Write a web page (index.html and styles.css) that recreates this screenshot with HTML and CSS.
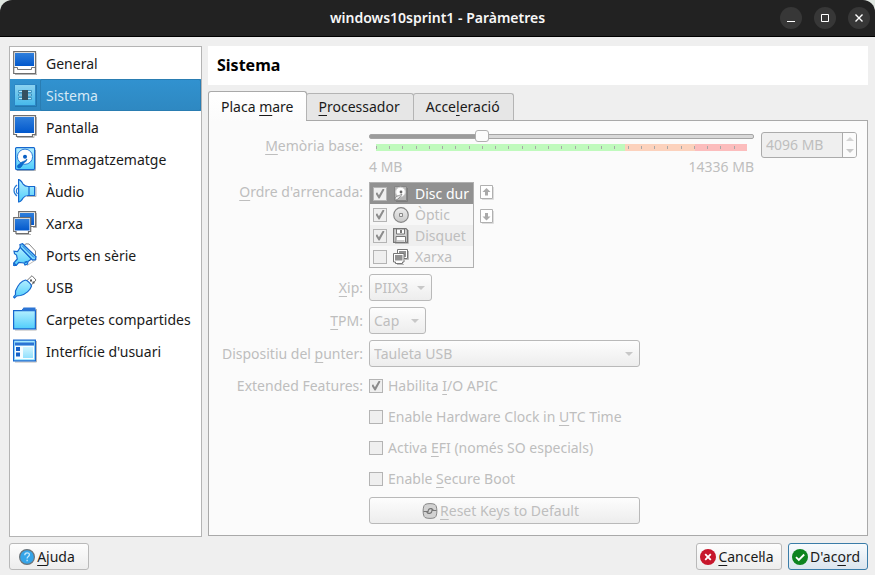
FILE: index.html
```html
<!DOCTYPE html>
<html lang="ca">
<head>
<meta charset="utf-8">
<title>windows10sprint1 - Paràmetres</title>
<link rel="stylesheet" href="styles.css">
</head>
<body>
<svg class="defs" aria-hidden="true">
  <defs>
    <linearGradient id="screen" x1="0" y1="0" x2="0" y2="1"><stop offset="0" stop-color="#2f7fdc"/><stop offset="1" stop-color="#0258cc"/></linearGradient>
    <linearGradient id="sky" x1="0" y1="0" x2="0" y2="1"><stop offset="0" stop-color="#b4efff"/><stop offset="1" stop-color="#4fcdfb"/></linearGradient>
    <linearGradient id="silver" x1="0" y1="0" x2="0" y2="1"><stop offset="0" stop-color="#eeeeee"/><stop offset="1" stop-color="#c8c8c8"/></linearGradient>
  </defs>
</svg>
<div class="window">
  <header class="titlebar">
    <h1 class="titlebar-text">windows10sprint1 - Paràmetres</h1>
    <div class="titlebar-buttons">
      <button class="round" aria-label="Minimitza"><svg viewBox="0 0 22 22"><path d="M7 14.5h8" stroke="#fff"/></svg></button>
      <button class="round" aria-label="Maximitza"><svg viewBox="0 0 22 22"><path d="M7.5 7.5h7v7h-7z" fill="none" stroke="#fff"/></svg></button>
      <button class="round" aria-label="Tanca"><svg viewBox="0 0 22 22"><path d="M7.5 7.5l7 7m0-7l-7 7" stroke="#fff" stroke-width="1.4"/></svg></button>
    </div>
  </header>

  <main class="body">
    <nav class="sidebar">
      <a class="item" href="#general"><svg class="icon" viewBox="0 0 24 24"><path d="M2 23.5h22V2" fill="none" stroke="#b5b5b5"/><path d="M.7.7h21.8v21.8H.7z" fill="#fff" stroke="#6e6e6e" stroke-width="1.2"/><path d="M2 2h19v13H2z" fill="url(#screen)"/><path d="M1 16.5h3.500v2h14v-2H22" fill="none" stroke="#777"/></svg><span class="item-text">General</span></a>
      <a class="item selected" href="#sistema"><svg class="icon" viewBox="0 0 24 24"><path d="M2 23.500h21.500V2" fill="none" stroke="#2277ad"/><path d="M1.500 1.500h21v21h-21z" fill="url(#sky)" fill-opacity=".7" stroke="#2b86c5"/><path d="M5.500 7.500h5v2h-5zm0 3.500h5v2h-5zm0 3.500h5v2h-5zm8-7h5v2h-5zm0 3.500h5v2h-5zm0 3.500h5v2h-5z" fill="#b8e8fa" stroke="#2d87b5" stroke-width=".8"/><path d="M9 7h6v10H9z" fill="#35505f"/></svg><span class="item-text">Sistema</span></a>
      <a class="item" href="#pantalla"><svg class="icon" viewBox="0 0 24 24"><path d="M4 22.500h17v-2h2.500V2" fill="none" stroke="#b5b5b5"/><path d="M.7.700h21.800v18.800H19.500v2H3.500v-2H.7z" fill="#fff" stroke="#6e6e6e" stroke-width="1.2"/><path d="M2 2h19v16H2z" fill="url(#screen)"/></svg><span class="item-text">Pantalla</span></a>
      <a class="item" href="#emmagatzematge"><svg class="icon" viewBox="0 0 24 24"><path d="M4 23.500h18.500V3" fill="none" stroke="#b5b5b5"/><rect x="2.600" y=".6" width="19" height="22" rx="1" fill="url(#sky)" stroke="#1668cf" stroke-width="1.200"/><circle cx="12" cy="9.700" r="7.600" fill="#fff" stroke="#2c7cd8"/><circle cx="12" cy="9.700" r="2" fill="#0a5fc4"/><path d="M14 12c-1 4-3 3-4 5-1 2-2 4-4 4s-2-2-1-3c2-1 2-2 4-3s3-1 5-3z" fill="#0a6cd2" stroke="#0759b4" stroke-width=".6"/></svg><span class="item-text">Emmagatzematge</span></a>
      <a class="item" href="#audio"><svg class="icon" viewBox="0 0 24 24"><path d="M14 17.500h9V8" fill="none" stroke="#b5b5b5"/><path d="M4 6C0 9 0 14 4 17M4.500 9C3 11 3 13 4.500 15" fill="none" stroke="#247ad6" stroke-width="1.200"/><path d="M5.600.600c2 0 3 2 4.500 4.500 1.500 2 3 2.400 5 2.400h6.500v9h-6.500c-2 0-3.500.5-5 2.500-1.500 2.500-2.500 4-4.500 4z" fill="url(#sky)" stroke="#1668cf" stroke-width="1.200"/><path d="M16 8v8" stroke="#1668cf" stroke-width="1.200"/></svg><span class="item-text">Àudio</span></a>
      <a class="item" href="#xarxa"><svg class="icon" viewBox="0 0 24 24"><path d="M20 16.500h3.500V2M3 23.500h15" fill="none" stroke="#b5b5b5"/><path d="M5.700.700h16.800v14.800H5.700z" fill="#fff" stroke="#6e6e6e" stroke-width="1.200"/><path d="M7 2h14v12H7z" fill="url(#screen)"/><path d="M.7 6.700h17v13.800h-2.200v2H3v-2H.7z" fill="#fff" stroke="#6e6e6e" stroke-width="1.200"/><path d="M2 8h14.500v11.500H2z" fill="url(#screen)"/></svg><span class="item-text">Xarxa</span></a>
      <a class="item" href="#serie"><svg class="icon" viewBox="0 0 24 24"><path d="M4 21.500L1.500 23M14 22.500l9.500-6" stroke="#bbb"/><path d="M11 2.500l2-1.700 3 .2 6.500 7v4l-2 1z" fill="#fff" stroke="#888"/><path d="M7.500 4L4.500 8.500 1 8.200l.5 2.500L3.500 12l.8 4L.7 20v2.500h2.500l2.500-3 5.300.5 1 2 2.500-1 .5-2.500 3.500-2.500z" fill="url(#sky)" stroke="#1668cf" stroke-width="1.200"/><path d="M7 1.500L9.500.700l13.500 13-.5 3-3 .3L7.300 4.500z" fill="#7fdcff" stroke="#1668cf" stroke-width="1.300"/><path d="M9 2.500l12 12" stroke="#1668cf"/><path d="M1 20l2 2.500M11.500 19.500l3-1" stroke="#1668cf" stroke-width="1.500"/></svg><span class="item-text">Ports en sèrie</span></a>
      <a class="item" href="#usb"><svg class="icon" viewBox="0 0 24 24"><path d="M13.500 6L19 .700 23 5l-5.500 6z" fill="#fff" stroke="#777"/><path d="M17 4.500h2v2h-2zm2.500 2h2v2h-2z" fill="#555"/><path d="M12.500 5c2 .500 5.500 4 6 6-1 4-6 8.500-11 9.500l-4 .5-2 2-1-1 2-2.500V16C4.500 11 8 6 12.500 5z" fill="url(#sky)" stroke="#1668cf" stroke-width="1.200"/></svg><span class="item-text">USB</span></a>
      <a class="item" href="#carpetes"><svg class="icon" viewBox="0 0 24 24"><path d="M2 23h21.500V2" fill="none" stroke="#b5b5b5"/><path d="M8.500 4l2-3.500h12V6H8.500z" fill="#2b74d4"/><path d="M.6 3.600h21.800v18.300H.6z" fill="url(#sky)" stroke="#1668cf" stroke-width="1.200"/><path d="M9 3h13.500" stroke="#2b74d4" stroke-width="2"/></svg><span class="item-text">Carpetes compartides</span></a>
      <a class="item" href="#interficie"><svg class="icon" viewBox="0 0 24 24"><path d="M2 23h21.500V2" fill="none" stroke="#b5b5b5"/><path d="M.6 1.100h21.800v20.800H.6z" fill="#a4e7fd" stroke="#1668cf" stroke-width="1.200"/><path d="M2 6.500h19V20H2z" fill="#f7fdff"/><path d="M2 3.500h19v3H2z" fill="#2b74d4"/><path d="M10 8h10v11H10z" fill="url(#sky)" fill-opacity=".6"/><path d="M3 8h4v4H3zm0 5.500h4v4H3z" fill="#1462c8"/></svg><span class="item-text">Interfície d'usuari</span></a>
    </nav>

    <section class="content">
      <h2 class="heading">Sistema</h2>
      <div class="tabs" role="tablist">
        <button class="tab active" role="tab" aria-selected="true">Placa <u>m</u>are</button>
        <button class="tab" role="tab"><u>P</u>rocessador</button>
        <button class="tab" role="tab">Acce<u>l</u>eració</button>
      </div>
      <form class="pane">
        <label class="label memory-label" for="memory"><u>M</u>emòria base:</label>
        <div class="memory">
          <div class="slider">
            <input class="range" id="memory" type="range" min="4" max="14336" value="4096" disabled>
            <div class="scale"></div>
            <div class="limits"><span>4 MB</span><span>14336 MB</span></div>
          </div>
          <div class="spin">
            <input class="spin-input" type="text" value="4096 MB" aria-label="Memòria base" disabled>
            <div class="spin-buttons">
              <button class="spin-button" type="button" aria-label="Més" disabled><span class="arrow up"></span></button>
              <button class="spin-button" type="button" aria-label="Menys" disabled><span class="arrow"></span></button>
            </div>
          </div>
        </div>

        <span class="label top"><u>O</u>rdre d'arrencada:</span>
        <div class="boot">
          <div class="boot-list">
            <label class="boot-item current"><input class="check" type="checkbox" checked disabled><svg class="small" viewBox="0 0 16 16"><path d="M3 15.500h11.500V2" fill="none" stroke="#7c7c7c"/><path d="M1.500.500h12v14h-12z" fill="#b4b4b4" stroke="#858585"/><circle cx="7.500" cy="6" r="4.800" fill="#fff" stroke="#d0d0d0"/><circle cx="8" cy="6" r="1.400" fill="#666"/><path d="M9 8c-1 3-3 3-4 5-1 1-3 1-3-1 1-2 4-2 7-4z" fill="#eee" stroke="#777" stroke-width=".7"/></svg>Disc dur</label>
            <label class="boot-item"><input class="check" type="checkbox" checked disabled><svg class="small" viewBox="0 0 16 16"><circle cx="8" cy="8" r="7.300" fill="url(#silver)" stroke="#868686" stroke-width="1.200"/><path d="M6.500 6.500h3v3h-3z" fill="#eee" stroke="#888"/></svg>Òptic</label>
            <label class="boot-item"><input class="check" type="checkbox" checked disabled><svg class="small" viewBox="0 0 16 16"><path d="M2 15.500h13.500V2" fill="none" stroke="#bbb"/><path d="M.6.600h12.400l1.400 1.400v12.400H.6z" fill="#d5d5d5" stroke="#777" stroke-width="1.200"/><path d="M3.500 1h8v5h-8zM3 8.500h9.500v6H3z" fill="#fff" stroke="#777"/><path d="M7 2h2v3H7z" fill="#777"/><path d="M4 12h7.500v2H4z" fill="#ccc"/></svg>Disquet</label>
            <label class="boot-item"><input class="check" type="checkbox" disabled><svg class="small" viewBox="0 0 16 16"><path d="M4.500.500h10v9h-10z" fill="#fff" stroke="#777"/><path d="M6 2h7v6H6z" fill="#929292"/><path d="M.5 4.500h10.500v8.500H9.500v1.500h-7V13h-2z" fill="#fff" stroke="#777"/><path d="M2 6h7.500v5.500H2z" fill="#929292"/><path d="M12 10.500h3.500V2M4 15.500h7" fill="none" stroke="#bbb"/></svg>Xarxa</label>
          </div>
          <div class="boot-buttons">
            <button class="move" type="button" aria-label="Amunt" disabled><svg viewBox="0 0 14 15"><path d="M2 14.500h11.500V2" fill="none" stroke="#ddd"/><path d="M.5.500h12v13H.5z" fill="#fff" stroke="#b0b0b0"/><path d="M6.500 3L2.500 7h2.500v3.500h3V7h2.500z" fill="#aaa"/></svg></button>
            <button class="move" type="button" aria-label="Avall" disabled><svg viewBox="0 0 14 15"><path d="M2 14.500h11.500V2" fill="none" stroke="#ddd"/><path d="M.5.500h12v13H.5z" fill="#fff" stroke="#b0b0b0"/><path d="M6.500 11.500l4-4H8V4H5v3.500H2.500z" fill="#aaa"/></svg></button>
          </div>
        </div>

        <label class="label" for="chip"><u>X</u>ip:</label>
        <div class="combo chip"><select class="select" id="chip" disabled><option>PIIX3</option></select></div>

        <label class="label" for="tpm"><u>T</u>PM:</label>
        <div class="combo tpm"><select class="select" id="tpm" disabled><option>Cap</option></select></div>

        <label class="label" for="pointer">Dispositiu del <u>p</u>unter:</label>
        <div class="combo wide"><select class="select" id="pointer" disabled><option>Tauleta USB</option></select></div>

        <span class="label">Extended Features:</span>
        <label class="feature"><input class="check" type="checkbox" checked disabled><span>Habilita <u>I</u>/O APIC</span></label>
        <label class="feature"><input class="check" type="checkbox" disabled><span>Enable Hardware Clock in <u>U</u>TC Time</span></label>
        <label class="feature"><input class="check" type="checkbox" disabled><span>Activa <u>E</u>FI (només SO especials)</span></label>
        <label class="feature"><input class="check" type="checkbox" disabled><span>Enable <u>S</u>ecure Boot</span></label>
        <button class="button wide reset" type="button" disabled><svg class="small" viewBox="0 0 16 16"><path d="M3 1.500C5 .3 11 .3 13 1.500 15.500 3 15.500 13 13 14.500 11 15.700 5 15.700 3 14.500.5 13 .5 3 3 1.500z" fill="#d2d2d2" stroke="#888"/><path d="M1.500 8.500h4.500c0-3 4-4 5-1.500M14.500 7.500H10c0 3-4 4-5 1.500M9 5.500l2.500 2M7 10.500L4.500 9" fill="none" stroke="#777" stroke-width="1.200"/></svg><span><u>R</u>eset Keys to Default</span></button>
      </form>
    </section>
  </main>

  <footer class="footer">
    <button class="button help"><svg class="small" viewBox="0 0 16 16"><circle cx="8" cy="8" r="7.400" fill="#35a4e8" stroke="#6d7378" stroke-width="1.200"/><path d="M5.800 6.200c0-3 4.600-3 4.600-.4 0 1.800-2.300 1.700-2.300 3.700m0 1.200v1.500" fill="none" stroke="#c9eafb" stroke-width="1.300"/></svg><span><u>A</u>juda</span></button>
    <button class="button cancel"><svg class="small" viewBox="0 0 16 16"><circle cx="8" cy="8" r="8" fill="#c7162b"/><path d="M5.200 5.200l5.600 5.600m0-5.600l-5.600 5.600" stroke="#fff" stroke-width="1.800"/></svg><span><u>C</u>ancel·la</span></button>
    <button class="button primary"><svg class="small" viewBox="0 0 16 16"><circle cx="8" cy="8" r="8" fill="#0e8420"/><path d="M4 8.200l2.800 2.800L12.200 5.500" fill="none" stroke="#fff" stroke-width="1.800"/></svg><span>D'ac<u>o</u>rd</span></button>
  </footer>
</div>
</body>
</html>
```
FILE: styles.css
```css
* {
  box-sizing: border-box;
}

body {
  margin: 0;
  background: #dfe6e0;
  color: #1a1a1a;
  font: 14px/20px "Noto Sans", "Open Sans", sans-serif;
}

button,
input,
select {
  font: inherit;
  color: inherit;
  margin: 0;
  padding: 0;
}

u {
  text-decoration: underline;
  text-decoration-thickness: 1px;
  text-decoration-skip-ink: none;
  text-underline-offset: 3px;
}

.defs {
  position: absolute;
  width: 0;
  height: 0;
}

.window {
  display: flex;
  flex-direction: column;
  min-height: 100vh;
  background: #efefef;
  border-radius: 12px 12px 0 0;
  overflow: hidden;
}

/* Title bar */
.titlebar {
  display: grid;
  grid-template-columns: 1fr auto 1fr;
  align-items: center;
  height: 37px;
  padding: 0 5px;
  background: #222;
  border-bottom: 1px solid #000;
}

.titlebar-text {
  grid-column: 2;
  margin: 0;
  color: #f7f7f7;
  font-size: 14px;
  font-weight: 600;
}

.titlebar-buttons {
  display: flex;
  justify-content: flex-end;
  gap: 12px;
}

.round {
  width: 22px;
  height: 22px;
  border: 0;
  border-radius: 50%;
  background: #373737;
}

.round svg {
  display: block;
}

/* Body */
.body {
  flex: 1;
  display: flex;
  gap: 6px;
  padding: 9px 7px 0 9px;
}

.sidebar {
  flex: 0 0 193px;
  border: 1px solid #b4b4b4;
  background: #fff;
}

.item {
  display: flex;
  align-items: center;
  height: 32px;
  padding-left: 3px;
  color: #1a1a1a;
  text-decoration: none;
}

.icon {
  flex: none;
  width: 24px;
  height: 24px;
}

.item-text {
  flex: 1;
  margin-left: 3px;
  padding: 6px 0 4px 5px;
  border: 1px solid transparent;
  white-space: nowrap;
}

.selected {
  background: linear-gradient(#3192d0, #2e88c1);
  color: #d5e9f6;
}

.selected .item-text {
  border-color: #2a7db2;
  border-radius: 2px;
}

.content {
  flex: 1;
  display: flex;
  flex-direction: column;
  min-width: 0;
  margin-bottom: 1px;
}

.heading {
  margin: 0 0 6px;
  padding: 9px;
  background: #fff;
  color: #000;
  font-size: 16px;
  line-height: 21px;
  font-weight: 700;
}

.tabs {
  display: flex;
  align-items: flex-end;
  z-index: 1;
}

.tab {
  height: 27px;
  margin-left: -1px;
  padding: 0 13px 0 12px;
  border: 1px solid #b4b4b4;
  border-bottom: 0;
  border-radius: 3px 3px 0 0;
  background: #e6e6e6;
}

.tab.active {
  height: 30px;
  margin: 0 0 -1px;
  padding: 0 12px;
  border-color: #a9a9a9;
  background: linear-gradient(#fff, #fbfbfb);
}

/* Settings pane */
.pane {
  flex: 1;
  display: grid;
  grid-template-columns: 144px 1fr;
  align-content: start;
  align-items: center;
  gap: 6px;
  padding: 9px 10px 10px;
  border: 1px solid #a9a9a9;
  background: #fbfbfb;
  color: #bebebe;
}

.label {
  text-align: right;
  white-space: nowrap;
}

.label.top {
  align-self: start;
}

.memory-label {
  align-self: start;
  margin-top: 6px;
}

.memory {
  display: flex;
  align-items: flex-start;
  gap: 7px;
}

.slider {
  flex: 1;
  height: 46px;
}

.range {
  display: block;
  width: 100%;
  height: 13px;
  appearance: none;
  background: none;
}

.range::-webkit-slider-runnable-track {
  height: 5px;
  border: 1px solid #a5a5a5;
  border-radius: 2px;
  background: linear-gradient(to right, #9c9c9c 29%, #d9d9d9 29%);
}

.range::-webkit-slider-thumb {
  appearance: none;
  width: 14px;
  height: 12px;
  margin-top: -5px;
  border: 1px solid #b0b0b0;
  border-radius: 3px;
  background: #fcfcfc;
}

.scale {
  height: 7px;
  margin: 1px 7px 0;
  background:
    repeating-linear-gradient(to right, #a8a8a8 0 1px, transparent 1px calc(100% / 28)) 0 2px / 100% 3px no-repeat,
    linear-gradient(to right, #c0fabd 67%, #fcd2bd 67% 86%, #fcbdbd 86%);
}

.limits {
  display: flex;
  justify-content: space-between;
  margin-top: 6px;
}

.spin {
  display: flex;
  width: 96px;
  height: 26px;
  margin-top: 2px;
  border: 1px solid #ababab;
  border-radius: 3px;
  background: #efefef;
}

.spin-input {
  flex: 1;
  min-width: 0;
  padding-left: 4px;
  border: 0;
  background: none;
}

.spin-buttons {
  display: flex;
  flex-direction: column;
  width: 14px;
  border-left: 1px solid #ababab;
  border-radius: 0 2px 2px 0;
  background: #fbfbfb;
}

.spin-button {
  flex: 1;
  display: flex;
  align-items: center;
  justify-content: center;
  border: 0;
  background: none;
}

.arrow,
.combo::after {
  border: 4px solid transparent;
  border-top-color: #c8c8c8;
  border-bottom-width: 0;
}

.arrow.up {
  border-top-width: 0;
  border-bottom: 4px solid #d4d4d4;
}

.boot {
  display: flex;
  gap: 6px;
}

.boot-list {
  border: 1px solid #b0b0b0;
  background: #f7f7f7;
}

.boot-item {
  display: flex;
  align-items: center;
  width: 103px;
  height: 21px;
  padding-left: 3px;
  white-space: nowrap;
}

.boot-item .small {
  margin: 0 6px;
}

.boot-item:nth-child(odd) {
  background: #efefef;
}

.boot-item.current {
  background: #919191;
  color: #fff;
}

.boot-buttons {
  display: flex;
  flex-direction: column;
  gap: 9px;
  padding-top: 3px;
}

.move {
  width: 14px;
  height: 15px;
  border: 0;
  background: none;
}

.move svg {
  display: block;
}

.small {
  flex: none;
  width: 16px;
  height: 16px;
}

.check {
  flex: none;
  appearance: none;
  display: grid;
  place-items: center;
  width: 14px;
  height: 14px;
  border: 1px solid #b4b4b4;
  background: #efefef;
}

.check:checked::after {
  content: "";
  width: 9px;
  height: 10px;
  background: #8c8c8c;
  clip-path: polygon(0 50%, 18% 38%, 38% 68%, 82% 0, 100% 10%, 46% 100%, 34% 100%);
}

.combo {
  display: grid;
  align-items: center;
}

.combo::after {
  content: "";
  grid-area: 1 / 1;
  justify-self: end;
  margin-right: 7px;
  pointer-events: none;
}

.select {
  grid-area: 1 / 1;
  appearance: none;
  width: 100%;
  height: 27px;
  padding-left: 4px;
  opacity: 1;
}

.select,
.button {
  border: 1px solid #b9b9b9;
  border-radius: 3px;
  background: linear-gradient(#fdfdfd, #ededed);
}

.chip {
  width: 63px;
}

.tpm {
  width: 57px;
}

.wide {
  width: 271px;
}

.feature {
  grid-column: 2;
  display: flex;
  align-items: center;
  gap: 5px;
  height: 25px;
}

.button {
  display: flex;
  align-items: center;
  justify-content: center;
  gap: 2px;
  height: 27px;
  padding-right: 4px;
}

.reset {
  grid-column: 2;
  padding-right: 8px;
}

/* Footer */
.footer {
  display: flex;
  gap: 6px;
  padding: 6px 7px 5px 9px;
}

.help {
  width: 80px;
  margin-right: auto;
}

.cancel {
  width: 86px;
}

.primary {
  width: 80px;
  border-color: #3a7ca8;
  background: linear-gradient(#f8fbfd, #dbe5ee);
}
```
